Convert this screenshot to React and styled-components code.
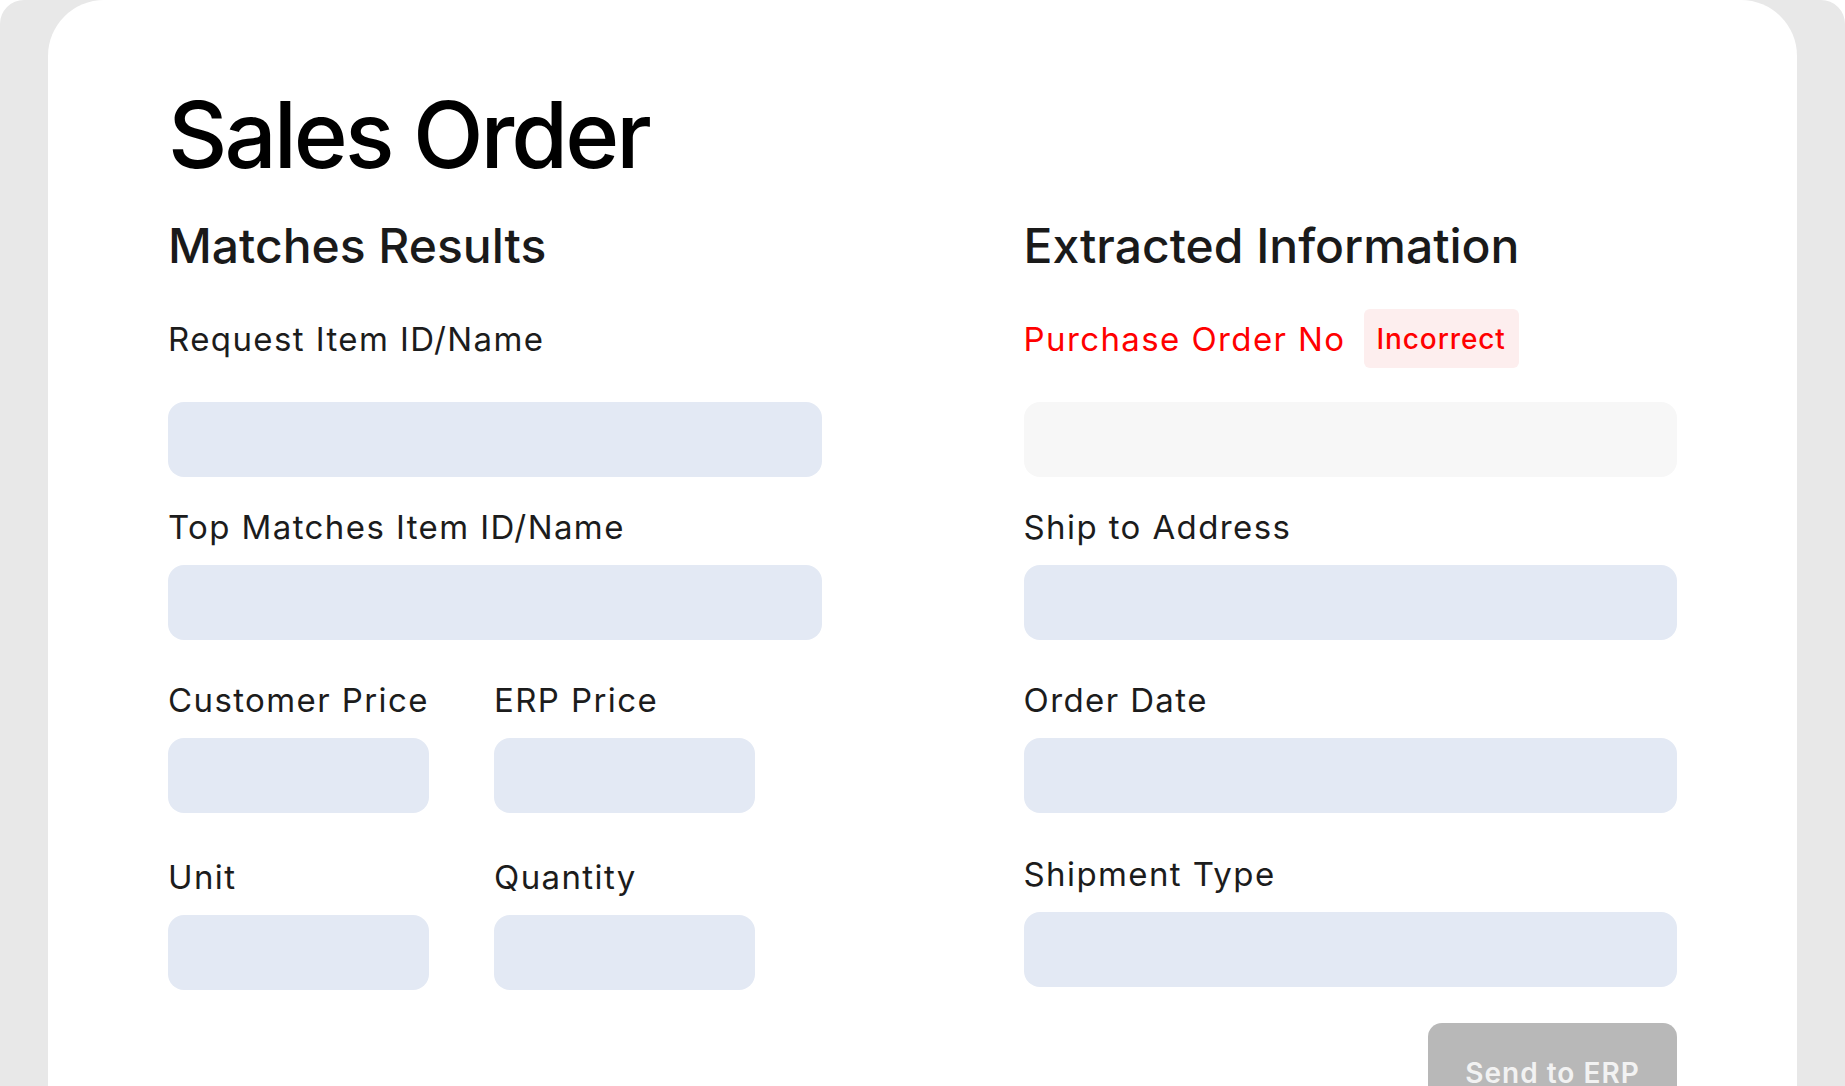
import React from 'react';
import styled, { createGlobalStyle } from 'styled-components';

const Global = createGlobalStyle`
	html, body {
		margin: 0;
		padding: 0;
		background: #ffffff;
		font-family: Inter, "Noto Sans", "Liberation Sans", sans-serif;
	}
	#root {
		height: 100vh;
	}
`

export default function App (){
	return(
		<>
			<Global/>
			<Frame>
				<Card>
					<Title>Sales Order</Title>
					<Columns>
						<Column>
							<SectionTitle>Matches Results</SectionTitle>
							<HeadRow><Label>Request Item ID/Name</Label></HeadRow>
							<Input first/>
							<Label gap={30}>Top Matches Item ID/Name</Label>
							<Input/>
							<Pair>
								<SmallField>
									<Label gap={40}>Customer Price</Label>
									<Input/>
								</SmallField>
								<SmallField>
									<Label gap={40}>ERP Price</Label>
									<Input/>
								</SmallField>
							</Pair>
							<Pair>
								<SmallField>
									<Label gap={44}>Unit</Label>
									<Input/>
								</SmallField>
								<SmallField>
									<Label gap={44}>Quantity</Label>
									<Input/>
								</SmallField>
							</Pair>
						</Column>
						<Column>
							<SectionTitle>Extracted Information</SectionTitle>
							<HeadRow>
								<Label error>Purchase Order No</Label>
								<Badge>Incorrect</Badge>
							</HeadRow>
							<Input first muted/>
							<Label gap={30}>Ship to Address</Label>
							<Input/>
							<Label gap={40}>Order Date</Label>
							<Input/>
							<Label gap={41}>Shipment Type</Label>
							<Input/>
							<Actions>
								<SendButton>Send to ERP</SendButton>
							</Actions>
						</Column>
					</Columns>
				</Card>
			</Frame>
		</>
	);
}

const Frame = styled.div`
	height: 100vh;
	box-sizing: border-box;
	background: #e8e8e8;
	border-radius: 24px 24px 0 0;
	padding: 0 48px;
	overflow: hidden;
	display: flex;
`

const Card = styled.div`
	flex: 1;
	background: #ffffff;
	border-radius: 56px 56px 0 0;
	padding: 79px 120px 0;
	display: flex;
	flex-direction: column;
`

const Title = styled.h1`
	margin: 0;
	font-size: 92px;
	line-height: 112px;
	font-weight: 500;
	color: #000000;
	letter-spacing: -3px;
`

const Columns = styled.div`
	display: grid;
	grid-template-columns: 1fr 1fr;
	column-gap: 202px;
	margin-top: 26px;
`

const Column = styled.div`
	display: flex;
	flex-direction: column;
`

const SectionTitle = styled.h2`
	margin: 0;
	font-size: 48px;
	line-height: 58px;
	font-weight: 500;
	color: #1a1a1a;
`

const HeadRow = styled.div`
	display: flex;
	align-items: center;
	gap: 18px;
	height: 59px;
	margin-top: 34px;
`

const Label = styled.div`
	font-size: 33px;
	line-height: 40px;
	font-weight: 400;
	letter-spacing: 1.4px;
	color: ${p => p.error ? '#ff0000' : '#1c1c1c'};
	margin-top: ${p => p.gap || 0}px;
	margin-bottom: ${p => p.gap ? 18 : 0}px;
`

const Badge = styled.span`
	display: inline-flex;
	align-items: center;
	height: 59px;
	box-sizing: border-box;
	padding: 0 13px;
	border-radius: 6px;
	background: #fdeeee;
	color: #ff0000;
	font-size: 28px;
	font-weight: 500;
	letter-spacing: 0.9px;
`

const Input = styled.div`
	height: 75px;
	border-radius: 16px;
	background: ${p => p.muted ? '#f7f7f7' : '#e3e9f4'};
	margin-top: ${p => p.first ? '34px' : '0'};
`

const Pair = styled.div`
	display: grid;
	grid-template-columns: 261px 261px;
	column-gap: 65px;
`

const SmallField = styled.div`
	display: flex;
	flex-direction: column;
`

const Actions = styled.div`
	display: flex;
	justify-content: flex-end;
	margin-top: 36px;
`

const SendButton = styled.button`
	border: none;
	border-radius: 14px;
	background: #b8b8b8;
	color: #f2f2f2;
	font-family: inherit;
	font-size: 28px;
	line-height: 34px;
	font-weight: 600;
	letter-spacing: 1px;
	padding: 33px 20px;
	width: 249px;
	cursor: pointer;
`
